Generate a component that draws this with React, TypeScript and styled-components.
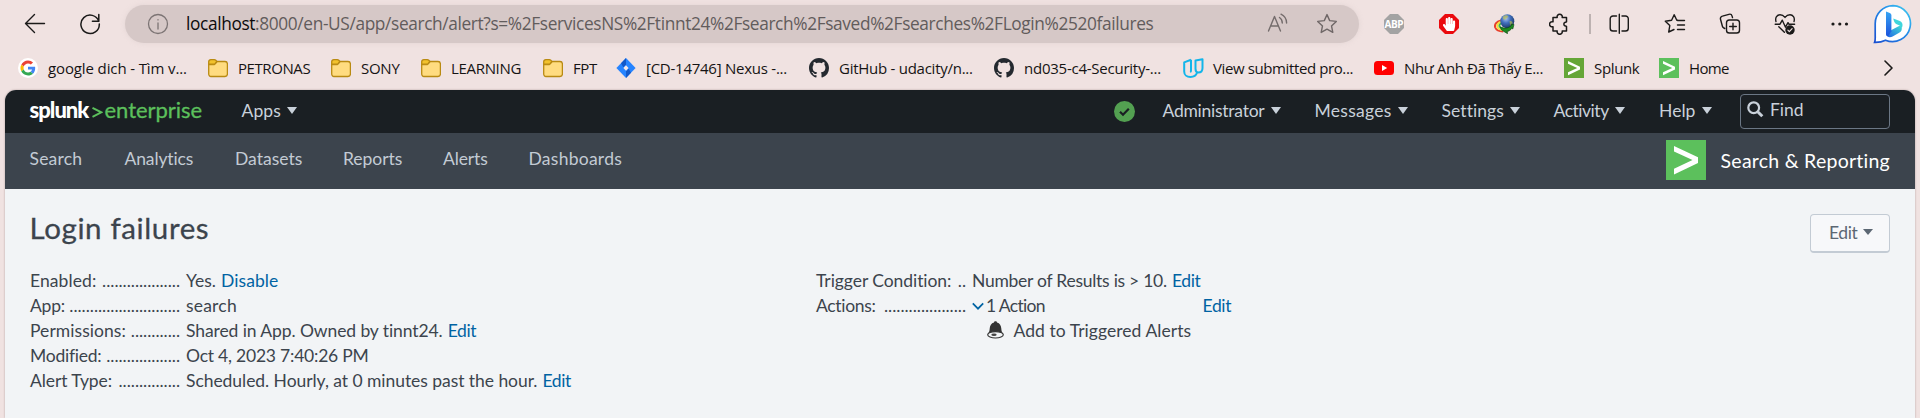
import React from 'react';
import styled, { createGlobalStyle } from 'styled-components';
import { FaHandPaper } from 'react-icons/fa';

const GlobalStyle = createGlobalStyle`
  * { box-sizing: border-box; }
  body { margin: 0; background: #f0e2e1; overflow: hidden; }
  svg { display: block; flex: none; }
`;

const Page = styled.div`
  width: 1920px;
  height: 418px;
  display: flex;
  flex-direction: column;
  background: #f0e2e1;
  overflow: hidden;
`;

/* ---------- browser chrome ---------- */

const Toolbar = styled.div`
  height: 48px;
  flex: none;
  display: flex;
  align-items: center;
  padding-left: 24px;
`;

const Slot = styled.div<{ $w: number }>`
  width: ${(p) => p.$w}px;
  flex: none;
  display: flex;
  align-items: center;
`;

const AddressBar = styled.div`
  width: 1234px;
  height: 38px;
  flex: none;
  border-radius: 19px;
  background: #d6c8c7;
  display: flex;
  align-items: center;
  padding-left: 22px;
  box-shadow: 0 0 4px rgba(214, 200, 199, 0.5);
`;

const Url = styled.div`
  width: 1081px;
  margin-left: 17px;
  font: 17.3px/24px 'Open Sans', 'Noto Sans', sans-serif;
  letter-spacing: -0.365px;
  white-space: nowrap;
  color: #625c5c;
  span { color: #0c0b0b; }
`;

const Bookmarks = styled.div`
  height: 42px;
  flex: none;
  display: flex;
  align-items: center;
  padding: 0 0 2px 18px;
`;

const Bookmark = styled.div<{ $w: number; $ls: number; $gap?: number }>`
  width: ${(p) => p.$w}px;
  flex: none;
  display: flex;
  align-items: center;
  gap: ${(p) => p.$gap ?? 10}px;
  font: 15px/20px 'Open Sans', 'Noto Sans', sans-serif;
  letter-spacing: ${(p) => p.$ls}px;
  white-space: nowrap;
  color: #161414;
`;

const BookmarkLabel = styled.span`
  padding-bottom: 1px;
`;

/* ---------- application ---------- */

const AppFrame = styled.div`
  flex: 1;
  margin: 0 5px;
  border-radius: 11px 11px 0 0;
  overflow: hidden;
  background: #f2f4f6;
  box-shadow: 0 0 2px rgba(90, 60, 60, 0.45);
  font-family: Lato, 'Open Sans', sans-serif;
  font-size: 17.5px;
  line-height: 25px;
  color: #3c444d;
`;

const TopBar = styled.div`
  height: 43px;
  display: flex;
  align-items: center;
  padding-left: 24.5px;
  background: #1a1f23;
  color: #c9d1da;
`;

const Brand = styled.div`
  width: 212px;
  height: 34px;
  flex: none;
  display: flex;
  align-items: center;
  font-size: 22px;
  line-height: 30px;
  color: #5cc05c;
  padding-bottom: 3px;
`;

const BrandBold = styled.span`
  width: 62px;
  font-weight: 900;
  letter-spacing: -1px;
  color: #fff;
`;

const BrandSign = styled.svg`
  margin: 3px 2px 0 0;
`;

const BrandName = styled.span`
  letter-spacing: -0.05px;
  -webkit-text-stroke: 0.3px #5cc05c;
`;

const MenuItem = styled.div<{ $w: number; $ls?: number }>`
  width: ${(p) => p.$w}px;
  flex: none;
  display: flex;
  align-items: center;
  gap: 6.5px;
  letter-spacing: ${(p) => p.$ls ?? 0}px;
  white-space: nowrap;
  padding-bottom: 3px;
`;

const Caret = styled.i<{ $small?: boolean }>`
  margin-top: ${(p) => (p.$small ? -1 : 0)}px;
  border-left: 5px solid transparent;
  border-right: 5px solid transparent;
  border-top: ${(p) => (p.$small ? 6 : 7)}px solid currentColor;
`;

const Spacer = styled.div`
  flex: 1;
`;

const FindBox = styled.div`
  width: 150px;
  height: 35px;
  margin: -1px 25px 0 0;
  border: 1px solid #6b7785;
  border-radius: 4px;
  display: flex;
  align-items: center;
  gap: 6px;
  padding: 0 0 3px 6px;
`;

const NavBar = styled.div`
  height: 56px;
  display: flex;
  align-items: center;
  padding: 0 25px 0 24.5px;
  background: #3c444d;
  color: #c3cbd4;
`;

const NavItem = styled.div<{ $w: number; $ls?: number }>`
  width: ${(p) => p.$w}px;
  letter-spacing: ${(p) => p.$ls ?? 0}px;
  padding-bottom: 5px;
`;

const AppName = styled.div`
  display: flex;
  align-items: center;
  gap: 15px;
  height: 40px;
  margin-top: -2px;
  font-size: 19.5px;
  letter-spacing: 0.25px;
  color: #fff;
`;

const Content = styled.div`
  padding: 25px 25px 0 25px;
`;

const TitleRow = styled.div`
  display: flex;
  justify-content: space-between;
  height: 53.5px;
`;

const Title = styled.h1`
  margin: -6px 0 0 -0.5px;
  font-size: 29.5px;
  line-height: 40px;
  font-weight: 400;
  letter-spacing: 0.62px;
  -webkit-text-stroke: 0.3px #3c444d;
`;

const EditButton = styled.button`
  width: 80px;
  height: 39px;
  border: 1px solid #c3cbd4;
  border-bottom-width: 2px;
  border-radius: 4px;
  background: #f7f8fa;
  display: flex;
  align-items: center;
  gap: 5px;
  padding: 0 0 2px 18px;
  font: 17.5px/25px Lato, 'Open Sans', sans-serif;
  letter-spacing: -0.38px;
  color: #5c6773;
`;

const Details = styled.div`
  display: grid;
  grid-template-columns: 786px 1fr;
  align-items: start;
`;

const Row = styled.div`
  display: flex;
  height: 25px;
  white-space: nowrap;
`;

const Term = styled.div<{ $ls?: number }>`
  width: 150px;
  flex: none;
  margin-right: 6px;
  display: flex;
  justify-content: space-between;
  letter-spacing: ${(p) => p.$ls ?? 0}px;
`;

const Leader = styled.span`
  letter-spacing: -0.03px;
`;

const Dots = ({ n }: { n: number }) => <Leader>{'.'.repeat(n)}</Leader>;

const Value = styled.div<{ $ls?: number }>`
  letter-spacing: ${(p) => p.$ls ?? 0}px;
`;

const Link = styled.a<{ $ls?: number; $ml?: number }>`
  margin-left: ${(p) => p.$ml ?? 5}px;
  letter-spacing: ${(p) => p.$ls ?? -0.35}px;
  color: #0063a3;
`;

const ActionCount = styled.div`
  width: 230.5px;
  display: flex;
  gap: 2px;
  letter-spacing: -0.65px;
  svg { margin-top: 9px; }
`;

const TriggeredAction = styled.div`
  display: flex;
  gap: 9.5px;
  margin-left: 171px;
  letter-spacing: 0.05px;
  svg { margin-top: 3px; }
`;

/* ---------- icons ---------- */

const line = { fill: 'none', stroke: '#1b1a19', strokeWidth: 1.5, strokeLinecap: 'round', strokeLinejoin: 'round' } as const;

const BackIcon = () => (
  <svg width="22" height="22" {...line} strokeWidth={1.4}><path d="M20.5 10.5H1.5M10.5 1.5 1.5 10.5l9 9" /></svg>
);
const ReloadIcon = () => (
  <svg width="22" height="22" {...line}><path d="M19.8 8.3A9.2 9.2 0 1 0 20.3 11M19.8 1.6v6.6h-6.4" /></svg>
);
const InfoIcon = () => (
  <svg width="22" height="22" {...line} stroke="#7c7474" strokeWidth={1.3}><circle cx="11" cy="11" r="9.5" /><path d="M11 10v6M11 6.6v.3" /></svg>
);
const ReadAloudIcon = () => (
  <svg width="22" height="22" {...line} stroke="#746c6c" strokeWidth={1.4}>
    <path d="M1.5 18 7.5 3.5 13.5 18M3.5 13h8M12.5 4.5c1.8 1.2 2.8 3 2.8 5.5M14 1.2c3.6 1.8 5.6 4.8 5.6 8.8" />
  </svg>
);
const StarIcon = () => (
  <svg width="22" height="22" {...line} stroke="#6f6767" strokeWidth={1.4}>
    <path d="m11 1.600 2.700 6 6.600.8-4.800 4.500 1.300 6.500L11 16.200l-5.800 3.200 1.300-6.500L1.700 8.400l6.600-.8z" />
  </svg>
);
const AbpText = styled.text`
  font: 700 10px 'Open Sans', sans-serif;
  letter-spacing: -0.4px;
  fill: #fff;
`;
const AbpIcon = () => (
  <svg width="20" height="20"><path d="M6 0h8l6 6v8l-6 6H6l-6-6V6z" fill="#a3a3a3" /><AbpText x="9.800" y="13.700" textAnchor="middle">ABP</AbpText></svg>
);
const StopBadge = styled.div`
  width: 20px;
  height: 20px;
  background: #ea0a0e;
  clip-path: polygon(30% 0, 70% 0, 100% 30%, 100% 70%, 70% 100%, 30% 100%, 0 70%, 0 30%);
  display: flex;
  align-items: center;
  justify-content: center;
  color: #fff;
`;
const GlobeIcon = () => (
  <svg width="21" height="20">
    <defs>
      <radialGradient id="globe" cx=".4" cy=".3" r=".8"><stop offset="0" stopColor="#a9c3ec" /><stop offset=".4" stopColor="#4170be" /><stop offset="1" stopColor="#12284f" /></radialGradient>
    </defs>
    <path d="M7 6.500C2 7.500.300 11 1.200 13.500c1 2.500 4 4 8 4" fill="none" stroke="#e8402c" strokeWidth="2" />
    <path d="M8 7.500C4 8.500 2.700 11 3.400 13c.8 2 3 2.800 6 3" fill="none" stroke="#f4e03a" strokeWidth="2" />
    <path d="M8 9C6 9.500 5 11.200 5.500 12.500c.8 1.200 2.400 1.800 4 1.900" fill="none" stroke="#3bb54a" strokeWidth="1.800" />
    <circle cx="13.300" cy="7.300" r="7" fill="url(#globe)" />
    <path d="M9 2.500c2-1.500 4-1.500 5-.5S12 4.500 11.500 5.500 8 5 9 2.500zM15.500 7c2 0 3.500.5 3 2.500s-2 2.500-2.500 1.500z" fill="#c3c548" opacity=".6" />
    <path d="M6 13c4 2 9 1.200 11.300-1.500l-.3-1.300 3 .3-1.200 4.500-1-.8c-1 2-3 3-4.500 3.200l.2 2.300L7.500 16z" fill="#1d8a20" stroke="#0a4210" strokeWidth=".6" />
  </svg>
);
const PuzzleIcon = () => (
  <svg width="21" height="22" {...line}>
    <path d="M4 4.500h4.200a2.600 2.600 0 1 1 5 0h4.300v4.300a1.200 1.200 0 0 1-1.300.4 2 2 0 0 0 0 3.800 1.200 1.200 0 0 1 1.300.4V18h-4.300a2.600 2.600 0 1 1-5 0H4v-4.300a2.600 2.600 0 1 1 0-4.900z" />
  </svg>
);
const Divider = styled.div`
  width: 2px;
  height: 20px;
  background: #bdb2b1;
`;
const SplitIcon = () => (
  <svg width="21" height="22" {...line} strokeWidth={1.4}>
    <path d="M7.500 3H4a2.800 2.800 0 0 0-2.800 2.800v9.400A2.800 2.800 0 0 0 4 18h3.500M13 3h3.500a2.800 2.800 0 0 1 2.800 2.800v9.400a2.800 2.800 0 0 1-2.800 2.800H13M10.300 1.200v19" />
  </svg>
);
const FavoritesIcon = () => (
  <svg width="22" height="22" {...line} strokeWidth={1.4}>
    <path d="m13.800 7.300-1-.1L10.200 1.700 7.600 7.300 1.300 8.200l4.500 4.400L4.700 19l5.300-2.500M13.500 7.500h7M13.500 12h7M13.500 16.500h7" />
  </svg>
);
const CollectionsIcon = () => (
  <svg width="22" height="22" {...line} strokeWidth={1.4}>
    <rect x="7.500" y="7" width="13" height="13" rx="2.800" />
    <path d="M14 10.200v6.600M10.700 13.500h6.600M5.800 15.500 4.800 15a3 3 0 0 1-1.400-1.800L1.500 6.300a2.600 2.600 0 0 1 1.900-3.200l6.500-1.800a2.600 2.600 0 0 1 3.200 1.800l.4 1.500" />
  </svg>
);
const HeartIcon = () => (
  <svg width="22" height="22" {...line} strokeWidth={1.4}>
    <path d="M2 8.500C.8 4.500 3.200 1.800 6 1.800c2.200 0 3.700 1 5 2.600 1.300-1.600 2.800-2.600 5-2.600 2.800 0 5.200 2.700 4 6.700M1.200 11.200H6l2.300-4 3.200 7 2.500-4.500.9 1.500h5.700M4.800 13.800l5.600 5.400" />
    <circle cx="16" cy="17" r="4.700" fill="#1b1a19" stroke="none" />
    <path d="m13.900 17.200 1.400 1.400 2.800-3" stroke="#f0e2e1" strokeWidth="1.200" />
  </svg>
);
const DotsIcon = () => (
  <svg width="18" height="6" fill="#1b1a19"><circle cx="2" cy="3" r="1.600" /><circle cx="8.800" cy="3" r="1.600" /><circle cx="15.500" cy="3" r="1.600" /></svg>
);
const BingIcon = () => (
  <svg width="40" height="40" viewBox="0 0 40 40">
    <defs>
      <linearGradient id="ring" x1="0" y1="1" x2="1" y2="0"><stop offset="0" stopColor="#1a4fd0" /><stop offset=".6" stopColor="#2490ea" /><stop offset="1" stopColor="#42d0f0" /></linearGradient>
      <linearGradient id="stem" x1="0" y1="0" x2="0" y2="1"><stop offset="0" stopColor="#37a6f4" /><stop offset="1" stopColor="#1c52dc" /></linearGradient>
      <linearGradient id="bowl" x1="0" y1="1" x2="1" y2="0"><stop offset="0" stopColor="#1f62e6" /><stop offset="1" stopColor="#42dfd4" /></linearGradient>
    </defs>
    <path d="M20 1.600a18 18 0 1 1-7.500 34.600C9 38 5 38.500 1.600 38.400c.9-1.800.6-4.400.6-8V19.500A18 18 0 0 1 20 1.600z" fill="#fff" stroke="url(#ring)" strokeWidth="1.700" />
    <path d="M17.500 26.500 27 21.500c3 1.800 2 5.500-.8 7.300l-6.600 3.700c-3 1.500-6.100.5-6.600-2.800z" fill="url(#bowl)" />
    <path d="m20.300 14.500 6.500 2.600c2.800 1.300 3.600 4.300 1.800 7.400-.2-1.800-1-2.600-2.600-3.300l-2.800-1.300c-1.800-1-2.600-3.600-2.900-5.400z" fill="#3fd6dc" />
    <path d="m13 7.500 3.800 1.500c1 .5 1.600 1.200 1.600 2.500v15.700L15 32.500c-1.200-.4-2-1.500-2-3z" fill="url(#stem)" />
  </svg>
);

const GoogleIcon = () => (
  <svg width="20" height="20" viewBox="0 0 20 20">
    <circle cx="10" cy="10" r="10" fill="#fff" />
    <g transform="translate(2.500 2.500) scale(.3125)">
      <path fill="#EA4335" d="M24 9.500c3.540 0 6.710 1.220 9.210 3.600l6.850-6.850C35.900 2.380 30.470 0 24 0 14.620 0 6.510 5.380 2.560 13.220l7.980 6.190C12.430 13.720 17.740 9.500 24 9.500z" />
      <path fill="#4285F4" d="M46.980 24.550c0-1.570-.15-3.090-.38-4.550H24v9.020h12.940c-.58 2.960-2.260 5.480-4.780 7.180l7.730 6c4.510-4.180 7.090-10.360 7.090-17.650z" />
      <path fill="#FBBC05" d="M10.530 28.590c-.48-1.450-.76-2.990-.76-4.590s.27-3.140.76-4.590l-7.980-6.190C.92 16.460 0 20.120 0 24c0 3.880.92 7.540 2.560 10.780l7.970-6.190z" />
      <path fill="#34A853" d="M24 48c6.480 0 11.930-2.130 15.890-5.810l-7.730-6c-2.150 1.450-4.920 2.300-8.160 2.300-6.260 0-11.570-4.220-13.470-9.910l-7.980 6.190C6.510 42.620 14.620 48 24 48z" />
    </g>
  </svg>
);
const FolderIcon = () => (
  <svg width="20" height="20" stroke="#b98a12" strokeWidth="1.300">
    <path d="M.7 6.500h5.500l3-3H17a2.400 2.400 0 0 1 2.400 2.400v10.200a2.400 2.400 0 0 1-2.400 2.400H3A2.400 2.400 0 0 1 .7 16z" fill="#ffdc80" />
    <path d="M.7 6V3.800A2.300 2.300 0 0 1 3 1.600h3.200c.7 0 1.200.3 1.600.7l1.100 1.200-1.600 2c-.4.400-1 .7-1.600.7z" fill="#f2c22c" />
  </svg>
);
const JiraIcon = () => (
  <svg width="20" height="20"><path d="m10 0 9.600 10L10 20 .4 10z" fill="#2684ff" /><path d="M10 0v6.800L7.300 9.300 5 5.200zM10 20v-6.800l2.700-2.500L15 14.800z" fill="#1259c9" /><path d="m10 7.300 2.600 2.700-2.600 2.700L7.400 10z" fill="#f6e9e8" /></svg>
);
const GithubIcon = () => (
  <svg width="20" height="20" viewBox="0 0 16 16" fill="#24292f"><path d="M8 0C3.580 0 0 3.580 0 8c0 3.540 2.290 6.530 5.470 7.590.4.070.55-.17.55-.38 0-.19-.01-.82-.01-1.490-2.010.37-2.530-.49-2.690-.94-.09-.23-.48-.94-.82-1.130-.28-.15-.68-.52-.01-.53.63-.01 1.080.58 1.230.82.72 1.210 1.870.87 2.330.66.07-.52.28-.87.51-1.070-1.780-.2-3.640-.89-3.640-3.950 0-.87.31-1.590.82-2.150-.08-.2-.36-1.020.08-2.120 0 0 .67-.21 2.200.82.64-.18 1.320-.27 2-.27s1.360.09 2 .27c1.530-1.040 2.200-.82 2.200-.82.44 1.100.16 1.920.08 2.120.51.56.82 1.270.82 2.150 0 3.070-1.870 3.750-3.650 3.950.29.25.54.73.54 1.480 0 1.070-.01 1.930-.01 2.200 0 .21.15.46.55.38A8.010 8.010 0 0 0 16 8c0-4.420-3.580-8-8-8z" /></svg>
);
const UdacityIcon = () => (
  <svg width="21" height="20" fill="none" stroke="#12b5ea" strokeWidth="2" strokeLinejoin="round">
    <path d="M8 1.800v10.700c0 1.200-.8 1.600-.8 1.600M8 1.800 1.200 4.400v9c0 3.300 2.700 5.600 6.200 5.600 3.300 0 5.800-1.600 6.600-4.200M12.500 2.500v8.200c0 2.200 1 3.800 2.800 3.800 2.400 0 4.200-1.700 4.200-4.500V1.200z" />
  </svg>
);
const YoutubeIcon = () => (
  <svg width="20" height="20"><rect y="3" width="20" height="14" rx="3.500" fill="#f00" /><path d="M8 7v6l5.200-3z" fill="#fff" /></svg>
);
const SplunkTile = ({ size, bg }: { size: number; bg: string }) => (
  <svg width={size} height={size} viewBox="0 0 40 40"><path d="M0 0h40v40H0z" fill={bg} /><path d="M8 6v5.500L26.500 20 8 28.700V34.500l24-11.600v-5.600z" fill="#fff" /></svg>
);
const ChevronRight = () => (
  <svg width="12" height="16" {...line} strokeWidth={1.600}><path d="m2 1 7 7-7 7" /></svg>
);
const CheckIcon = () => (
  <svg width="21" height="21"><circle cx="10.500" cy="10.500" r="10.500" fill="#53a051" /><path d="m6 10.800 3 3 5.800-6" fill="none" stroke="#1a1f23" strokeWidth="2.200" /></svg>
);
const SearchIcon = () => (
  <svg width="17" height="17" fill="none" stroke="#c9d1da"><circle cx="6.700" cy="6.700" r="5.400" strokeWidth="2.200" /><path d="m10.700 10.700 4.600 4.600" strokeWidth="3" /></svg>
);
const ChevronDown = () => (
  <svg width="12" height="9" fill="none" stroke="#0063a3" strokeWidth="1.700"><path d="m.8 1.300 5.200 5.400 5.200-5.400" /></svg>
);
const BellIcon = () => (
  <svg width="17" height="18">
    <path d="M7 1.500C7 .6 7.700.2 8.500.2s1.500.4 1.500 1.300c2.800.8 4.100 3 4.300 6 .1 2.500.8 4 2 5.500H.7c1.200-1.500 1.900-3 2-5.500.2-3 1.500-5.200 4.300-6z" fill="#333" />
    <ellipse cx="8.500" cy="13.800" rx="7.800" ry="3.200" fill="#f2f4f6" stroke="#333" strokeWidth="1.200" />
    <ellipse cx="7" cy="13.800" rx="2.700" ry="1.200" fill="#444" />
  </svg>
);

const bookmarks = [
  { label: 'google dich - Tìm v...', w: 190, ls: -0.12, icon: <GoogleIcon /> },
  { label: 'PETRONAS', w: 123, ls: -0.42, icon: <FolderIcon /> },
  { label: 'SONY', w: 90, ls: -0.27, icon: <FolderIcon /> },
  { label: 'LEARNING', w: 122, ls: -0.32, icon: <FolderIcon /> },
  { label: 'FPT', w: 73, ls: -0.4, icon: <FolderIcon /> },
  { label: '[CD-14746] Nexus -...', w: 193, ls: -0.25, icon: <JiraIcon /> },
  { label: 'GitHub - udacity/n...', w: 185, ls: -0.26, icon: <GithubIcon /> },
  { label: 'nd035-c4-Security-...', w: 189, ls: -0.24, icon: <GithubIcon /> },
  { label: 'View submitted pro...', w: 191, ls: -0.39, gap: 9, icon: <UdacityIcon /> },
  { label: 'Như Anh Đã Thấy E...', w: 190, ls: -0.38, icon: <YoutubeIcon /> },
  { label: 'Splunk', w: 95, ls: -0.35, icon: <SplunkTile size={20} bg="#65a637" /> },
  { label: 'Home', w: 224, ls: -0.65, icon: <SplunkTile size={20} bg="#5cc05c" /> },
];

export default function App() {
  return (
    <Page>
      <GlobalStyle />
      <Toolbar>
        <Slot $w={55}><BackIcon /></Slot>
        <Slot $w={46}><ReloadIcon /></Slot>
        <AddressBar>
          <InfoIcon />
          <Url><span>localhost</span>:8000/en-US/app/search/alert?s=%2FservicesNS%2Ftinnt24%2Fsearch%2Fsaved%2Fsearches%2FLogin%2520failures</Url>
          <Slot $w={49}><ReadAloudIcon /></Slot>
          <StarIcon />
        </AddressBar>
        <Slot $w={25} />
        <Slot $w={55}><AbpIcon /></Slot>
        <Slot $w={55}><StopBadge><FaHandPaper size={14} /></StopBadge></Slot>
        <Slot $w={55}><GlobeIcon /></Slot>
        <Slot $w={40}><PuzzleIcon /></Slot>
        <Slot $w={20}><Divider /></Slot>
        <Slot $w={55}><SplitIcon /></Slot>
        <Slot $w={55}><FavoritesIcon /></Slot>
        <Slot $w={55}><CollectionsIcon /></Slot>
        <Slot $w={57}><HeartIcon /></Slot>
        <Slot $w={42}><DotsIcon /></Slot>
        <BingIcon />
      </Toolbar>

      <Bookmarks>
        {bookmarks.map((b) => (
          <Bookmark key={b.label} $w={b.w} $ls={b.ls} $gap={b.gap}>{b.icon}<BookmarkLabel>{b.label}</BookmarkLabel></Bookmark>
        ))}
        <ChevronRight />
      </Bookmarks>

      <AppFrame>
        <TopBar>
          <Brand>
            <BrandBold>splunk</BrandBold>
            <BrandSign width="11" height="16"><path d="M.5 3.800 9.300 8.300.5 12.800" fill="none" stroke="#5cc05c" strokeWidth="2" /></BrandSign>
            <BrandName>enterprise</BrandName>
          </Brand>
          <MenuItem $w={60} $ls={0.1}>Apps<Caret /></MenuItem>
          <Spacer />
          <Slot $w={48.5}><CheckIcon /></Slot>
          <MenuItem $w={152} $ls={-0.25}>Administrator<Caret /></MenuItem>
          <MenuItem $w={127} $ls={0.3}>Messages<Caret /></MenuItem>
          <MenuItem $w={112} $ls={0.08}>Settings<Caret /></MenuItem>
          <MenuItem $w={105.5} $ls={-0.47}>Activity<Caret /></MenuItem>
          <MenuItem $w={81} $ls={0.05}>Help<Caret /></MenuItem>
          <FindBox><SearchIcon />Find</FindBox>
        </TopBar>

        <NavBar>
          <NavItem $w={95} $ls={0.2}>Search</NavItem>
          <NavItem $w={110.5} $ls={-0.13}>Analytics</NavItem>
          <NavItem $w={108}>Datasets</NavItem>
          <NavItem $w={100} $ls={-0.05}>Reports</NavItem>
          <NavItem $w={85.5} $ls={-0.12}>Alerts</NavItem>
          <NavItem $w={110} $ls={0.26}>Dashboards</NavItem>
          <Spacer />
          <AppName><SplunkTile size={40} bg="#5cc05c" />Search &amp; Reporting</AppName>
        </NavBar>

        <Content>
          <TitleRow>
            <Title>Login failures</Title>
            <EditButton>Edit<Caret $small /></EditButton>
          </TitleRow>
          <Details>
            <div>
              <Row><Term $ls={0.1}>Enabled:<Dots n={19} /></Term><Value>Yes.</Value><Link $ls={0.1}>Disable</Link></Row>
              <Row><Term $ls={-0.2}>App:<Dots n={27} /></Term><Value $ls={0.2}>search</Value></Row>
              <Row><Term $ls={0.05}>Permissions:<Dots n={12} /></Term><Value $ls={-0.09}>Shared in App. Owned by tinnt24.</Value><Link>Edit</Link></Row>
              <Row><Term $ls={-0.25}>Modified:<Dots n={18} /></Term><Value $ls={-0.22}>Oct 4, 2023 7:40:26 PM</Value></Row>
              <Row><Term $ls={-0.1}>Alert Type:<Dots n={15} /></Term><Value $ls={-0.05}>Scheduled. Hourly, at 0 minutes past the hour.</Value><Link>Edit</Link></Row>
            </div>
            <div>
              <Row><Term $ls={-0.06}>Trigger Condition:<Dots n={2} /></Term><Value $ls={-0.26}>Number of Results is &gt; 10.</Value><Link>Edit</Link></Row>
              <Row><Term $ls={-0.3}>Actions:<Dots n={20} /></Term><ActionCount><ChevronDown />1 Action</ActionCount><Link $ml={0}>Edit</Link></Row>
              <TriggeredAction><BellIcon />Add to Triggered Alerts</TriggeredAction>
            </div>
          </Details>
        </Content>
      </AppFrame>
    </Page>
  );
}
